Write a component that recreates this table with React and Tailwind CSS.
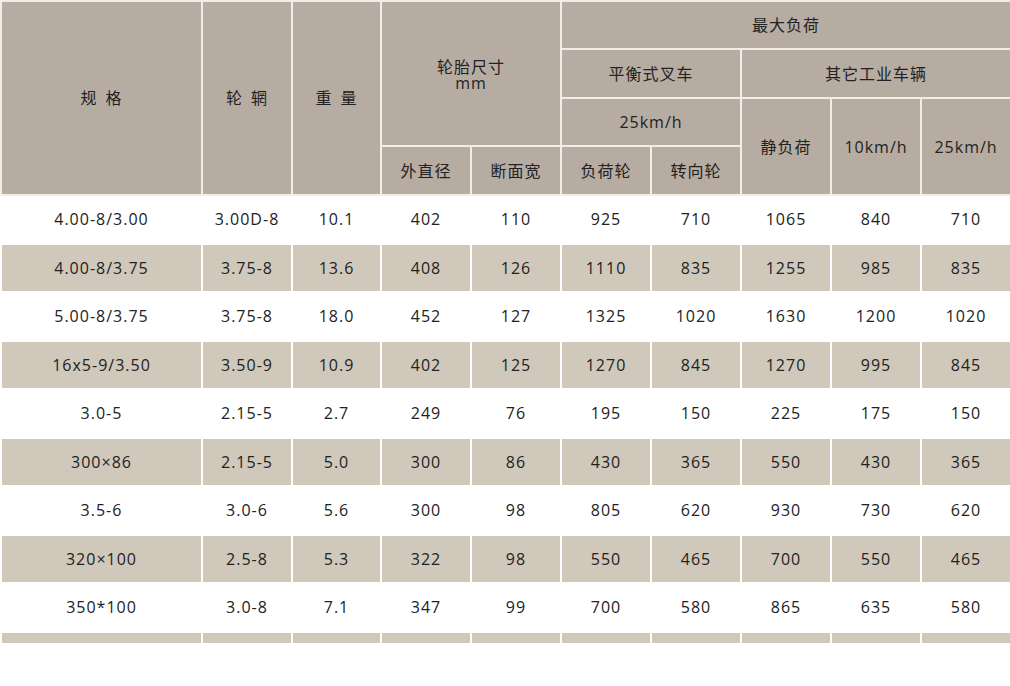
import React from 'react';

// Tire spec rows: size, rim, weight, OD, width, forklift load/steer, static, 10km/h, 25km/h
const rows = [
  ['4.00-8/3.00', '3.00D-8', '10.1', '402', '110', '925', '710', '1065', '840', '710'],
  ['4.00-8/3.75', '3.75-8', '13.6', '408', '126', '1110', '835', '1255', '985', '835'],
  ['5.00-8/3.75', '3.75-8', '18.0', '452', '127', '1325', '1020', '1630', '1200', '1020'],
  ['16x5-9/3.50', '3.50-9', '10.9', '402', '125', '1270', '845', '1270', '995', '845'],
  ['3.0-5', '2.15-5', '2.7', '249', '76', '195', '150', '225', '175', '150'],
  ['300×86', '2.15-5', '5.0', '300', '86', '430', '365', '550', '430', '365'],
  ['3.5-6', '3.0-6', '5.6', '300', '98', '805', '620', '930', '730', '620'],
  ['320×100', '2.5-8', '5.3', '322', '98', '550', '465', '700', '550', '465'],
  ['350*100', '3.0-8', '7.1', '347', '99', '700', '580', '865', '635', '580'],
];

const widths = [201, 90, 89, 90, 90, 90, 90, 90, 90, 90];

const th = 'border-2 border-[#f1ede8] bg-[#b6aca2] font-normal text-[16px] tracking-[1px] text-[#222] p-0 text-center align-middle';

const App = () => {
  return (
    <div className="w-[1010px] h-[686px] bg-white overflow-hidden" style={{ fontFamily: '"Open Sans", "Noto Sans CJK SC", sans-serif' }}>
      <table className="table-fixed border-collapse w-[1010px]">
        <colgroup>
          {widths.map((w, i) => (
            <col key={i} style={{ width: w }} />
          ))}
        </colgroup>
        <thead>
          <tr className="h-[48px]">
            <th rowSpan={4} className={th}>规<span className="inline-block w-[8px]" />格</th>
            <th rowSpan={4} className={th}>轮<span className="inline-block w-[8px]" />辋</th>
            <th rowSpan={4} className={th}>重<span className="inline-block w-[8px]" />量</th>
            <th rowSpan={3} colSpan={2} className={th}>
              <div className="leading-[16px] pt-[2px]">轮胎尺寸<br />mm</div>
            </th>
            <th colSpan={5} className={th}>最大负荷</th>
          </tr>
          <tr className="h-[49px]">
            <th colSpan={2} className={th}>平衡式叉车</th>
            <th colSpan={3} className={th}>其它工业车辆</th>
          </tr>
          <tr className="h-[48px]">
            <th colSpan={2} className={th}>25km/h</th>
            <th rowSpan={2} className={th}>静负荷</th>
            <th rowSpan={2} className={th}>10km/h</th>
            <th rowSpan={2} className={th}>25km/h</th>
          </tr>
          <tr className="h-[49px]">
            <th className={th}>外直径</th>
            <th className={th}>断面宽</th>
            <th className={th}>负荷轮</th>
            <th className={th}>转向轮</th>
          </tr>
        </thead>
        <tbody>
          {rows.map((r, i) => (
            <tr key={i} className={i % 2 === 1 ? 'h-[48.5px] bg-[#d0c8bb]' : 'h-[48.5px] bg-white'}>
              {r.map((c, j) => (
                <td key={j} className="border-2 border-white text-center align-middle text-[16px] text-[#222] p-0 tracking-[1px]">
                  {c}
                </td>
              ))}
            </tr>
          ))}
          <tr className="h-[12px] bg-[#d0c8bb]">
            {widths.map((_, j) => (
              <td key={j} className="border-2 border-white p-0" />
            ))}
          </tr>
        </tbody>
      </table>
    </div>
  );
};

export default App;
